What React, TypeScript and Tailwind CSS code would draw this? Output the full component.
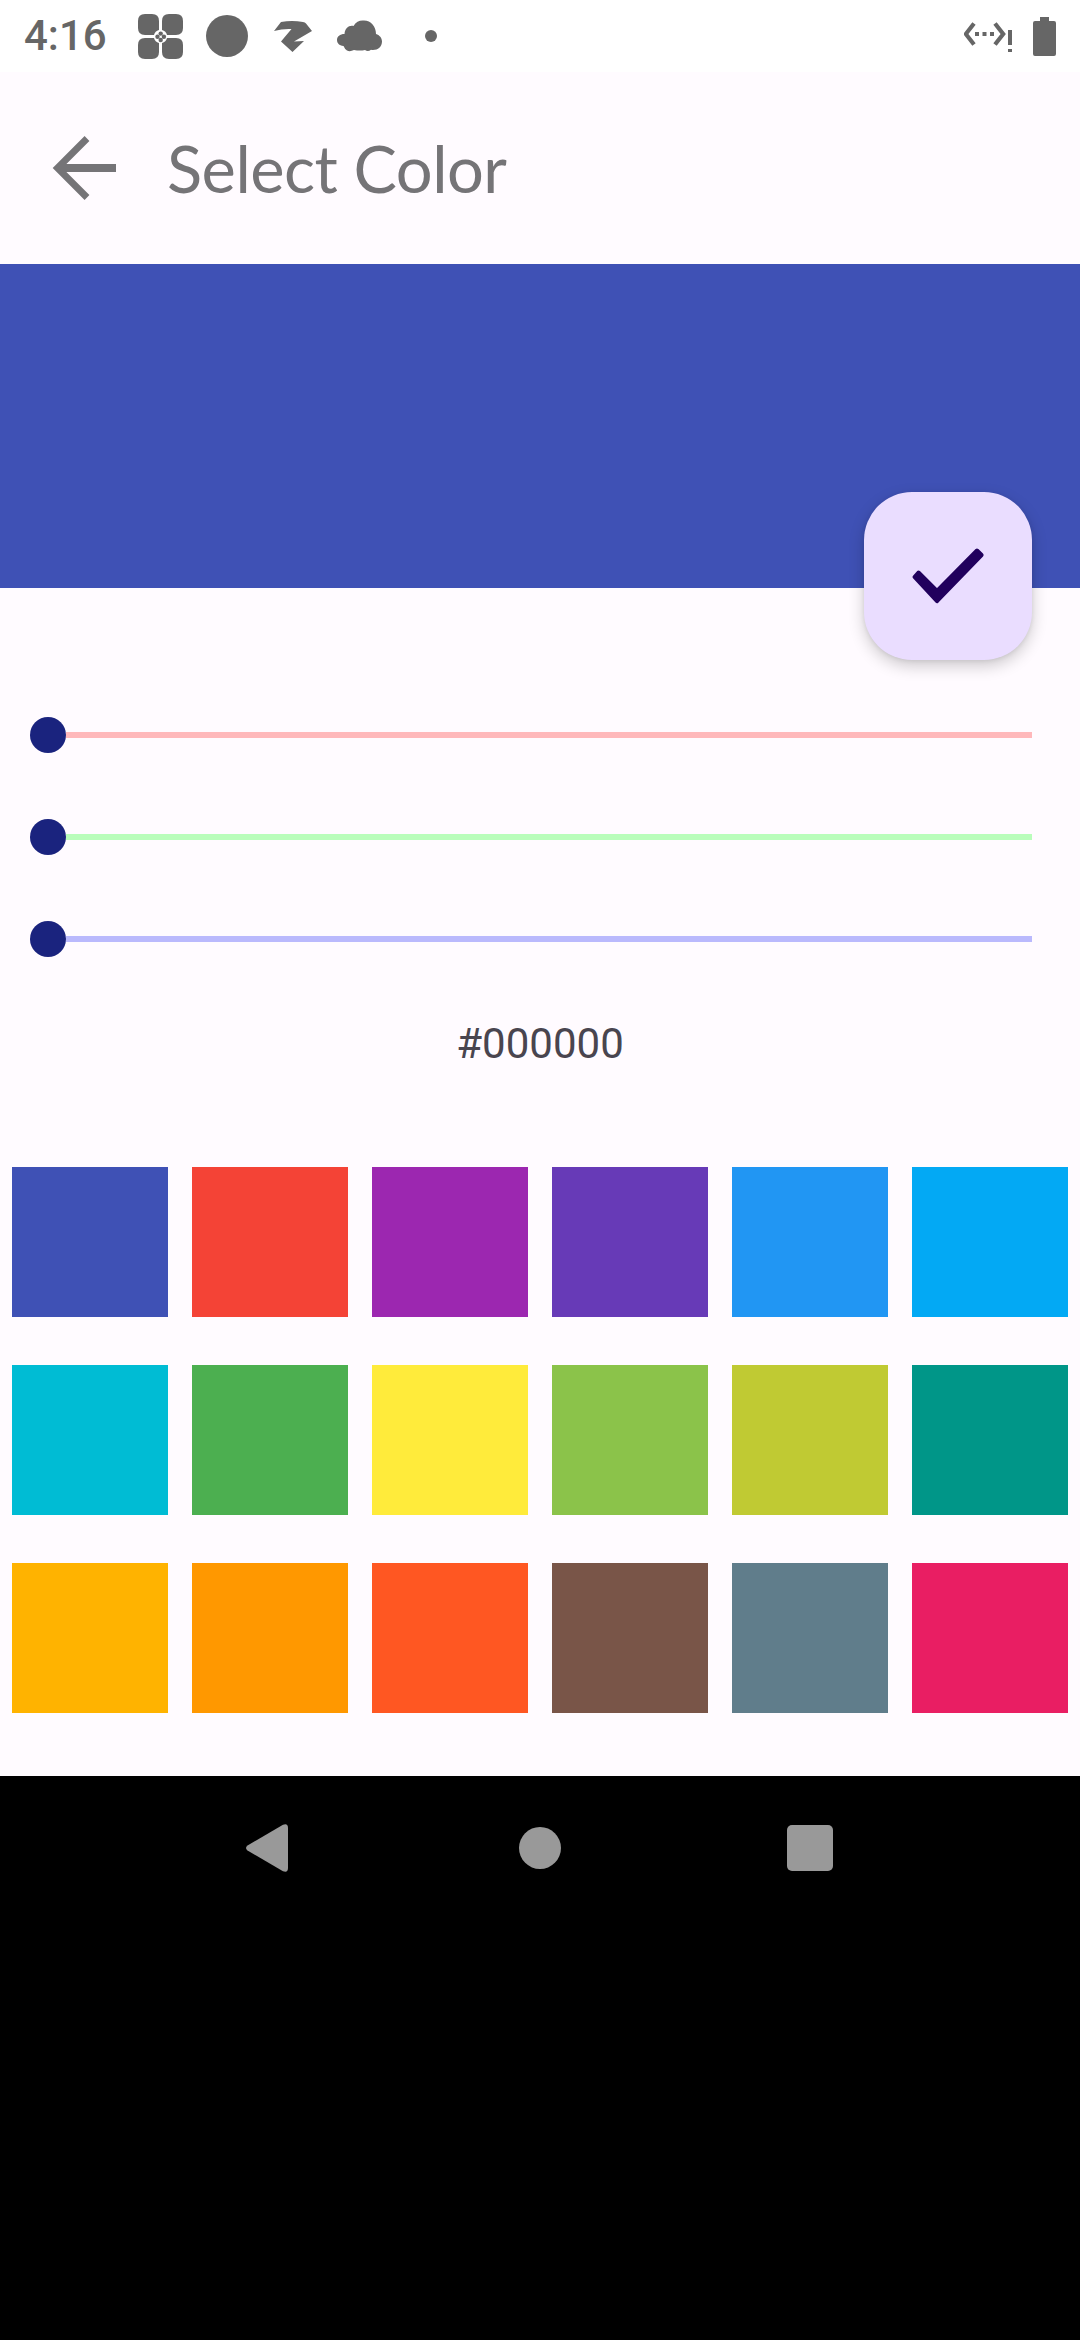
const swatches = [
  "bg-[#3f51b5]", "bg-[#f44336]", "bg-[#9c27b0]", "bg-[#673ab7]", "bg-[#2196f3]", "bg-[#03a9f4]",
  "bg-[#00bcd4]", "bg-[#4caf50]", "bg-[#ffeb3b]", "bg-[#8bc34a]", "bg-[#c0ca33]", "bg-[#009688]",
  "bg-[#ffb300]", "bg-[#ff9800]", "bg-[#ff5722]", "bg-[#795548]", "bg-[#607d8b]", "bg-[#e91e63]",
];

const channels = [
  { name: "Red", track: "bg-[#ffb8bb]" },
  { name: "Green", track: "bg-[#b9fdbb]" },
  { name: "Blue", track: "bg-[#bab9fd]" },
];

function StatusBar() {
  return (
    <div className="flex h-[72px] items-center bg-white pl-6 pr-6 text-[#666666]">
      <span className="w-[114px] font-['Roboto'] text-[42px] leading-[48px] font-medium whitespace-nowrap">4:16</span>
      <svg className="h-[45px] w-[45px]" viewBox="0 0 45 45" fill="currentColor">
        <path d="M7 0h7q7 0 7 7v9q-4 1-5 5H7q-7 0-7-7V7q0-7 7-7z" />
        <path d="M31 0h7q7 0 7 7v7q0 7-7 7h-9q-1-4-5-5V7q0-7 7-7z" />
        <path d="M7 24h9q1 4 5 5v9q0 7-7 7H7q-7 0-7-7v-7q0-7 7-7z" />
        <path d="M29 24h9q7 0 7 7v7q0 7-7 7h-7q-7 0-7-7v-9q4-1 5-5z" />
        <circle cx="22.7" cy="19.6" r="2.2" />
        <circle cx="22.7" cy="26" r="2.2" />
        <circle cx="19.5" cy="22.8" r="2.2" />
        <circle cx="25.9" cy="22.8" r="2.2" />
      </svg>
      <div className="ml-[23px] h-[42px] w-[42px] rounded-full bg-[#666666]" />
      <svg className="ml-[26px] h-8 w-[38px]" viewBox="0 0 38 32" fill="currentColor">
        <path d="M7 2Q18 0 29 2q2 0 3 1.500L38 11 20 21.500l10-.5L18.500 32 7 21.500 17.500 9Q9 8.500 0 11z" />
      </svg>
      <svg className="ml-[24px] h-8 w-[46px]" viewBox="0 0 46 32" fill="currentColor">
        <path d="M8.500 14C9 8 13 5 17.500 6 20 1.500 24 0 28 .5c7 0 12 6 12 13.500 3.500 1 6 4 6 7.500 0 5-4 8.500-9 8.500q-1 0-2-.3-3 2.500-6 .3-5 1.200-11 0-4 2-7 .5-2-1-3.500-4.500C3 25.500 1 23 1 20c0-3.500 3-6 7.500-6z" />
      </svg>
      <div className="ml-[43px] h-3 w-3 rounded-full bg-[#666666]" />
      <svg className="ml-auto h-8 w-12" viewBox="0 0 48 32" fill="currentColor">
        <path d="M10 3.500 1.800 14 10 24.500M31 3.500 39.200 14 31 24.500" fill="none" stroke="currentColor" strokeWidth="4.200" />
        <path d="M11 12h4v4h-4zM18.500 12h4v4h-4zM26 12h4v4h-4zM44 10h4v15h-4zM44 29h4v3h-4z" />
      </svg>
      <svg className="ml-[21px] h-[39px] w-[23px]" viewBox="0 0 23 39" fill="currentColor">
        <path d="M7 0h9v4h5q2 0 2 2v31q0 2-2 2H2q-2 0-2-2V6q0-2 2-2h5z" />
      </svg>
    </div>
  );
}

export default function App() {
  return (
    <div className="flex h-[2340px] w-[1080px] flex-col overflow-hidden bg-black">
      <StatusBar />
      <main className="flex h-[1704px] flex-col bg-[#fffbff]">
        <header className="flex h-[192px] items-center pl-[52px] text-[#757477]">
          <svg className="h-16 w-16" viewBox="0 0 64 64" fill="none" stroke="currentColor">
            <path d="M35 2.500 5.500 32 35 61.500" strokeWidth="6.800" />
            <path d="M7 32h57" strokeWidth="8.200" />
          </svg>
          <h1 className="ml-[51px] font-['Lato'] text-[65px] leading-[80px] tracking-[-0.5px] whitespace-nowrap">Select Color</h1>
        </header>
        <section className="relative h-[324px] shrink-0 bg-[#3f51b5]">
          <button
            aria-label="Confirm color"
            className="absolute right-12 -bottom-[72px] flex h-[168px] w-[168px] items-center justify-center rounded-[48px] bg-[#eaddff] shadow-[0_6px_16px_rgba(0,0,0,0.20),0_1px_4px_rgba(0,0,0,0.08)]"
          >
            <svg className="h-[72px] w-[84px]" viewBox="906 540 84 72">
              <path
                d="M914.500 577 937 601.200 981.600 555 977 550.500 937 591 918.500 572.500z"
                fill="#21005d"
                stroke="#21005d"
                strokeWidth="4"
                strokeLinejoin="round"
              />
            </svg>
          </button>
        </section>
        <section className="flex flex-col gap-[66px] pt-[129px] pr-12 pl-[30px]">
          {channels.map((c) => (
            <div key={c.name} className="flex h-9 items-center" role="slider" aria-label={c.name} aria-valuenow={0}>
              <span className="h-9 w-9 rounded-full bg-[#1a237e]" />
              <span className={`h-1.5 flex-1 ${c.track}`} />
            </div>
          ))}
        </section>
        <p className="mt-[62px] text-center font-['Roboto'] text-[42px] leading-[50px] text-[#49454f]">#000000</p>
        <section className="mt-[98px] grid grid-cols-6 gap-x-6 gap-y-12 px-3">
          {swatches.map((color) => (
            <button key={color} aria-label="Color" className={`h-[150px] ${color}`} />
          ))}
        </section>
      </main>
      <nav className="flex h-36 items-center justify-center">
        <div className="flex w-[270px] justify-center">
          <svg className="mr-[6px] h-12 w-[42px]" viewBox="0 0 42 48" fill="#999999">
            <path d="M1.500 21.500 37 .8Q42-1 42 4v40q0 5-5 3.200L1.500 26.500q-3-2.500 0-5z" />
          </svg>
        </div>
        <div className="flex w-[270px] justify-center">
          <span className="h-[42px] w-[42px] rounded-full bg-[#999999]" />
        </div>
        <div className="flex w-[270px] justify-center">
          <span className="h-[46px] w-[46px] rounded-[5px] bg-[#999999]" />
        </div>
      </nav>
    </div>
  );
}
